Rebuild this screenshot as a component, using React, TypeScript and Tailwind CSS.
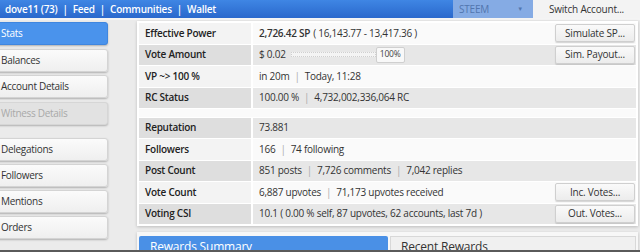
import React from "react";

const font = { fontFamily: '"Open Sans", "Liberation Sans", sans-serif' };

function SideBtn({ label, active, disabled }: { label: string; active?: boolean; disabled?: boolean }) {
  let cls =
    "h-[23px] w-[116px] -ml-[8px] pl-[8px] flex items-center rounded-[3px] text-[10px] tracking-[-0.3px] shadow-[0_1px_2px_rgba(0,0,0,0.25)] ";
  if (active) cls += "bg-[#4a93ec] text-white border border-[#3f86df]";
  else if (disabled) cls += "bg-[#e2e2e2] text-[#a9a9a9] border border-[#d6d6d6]";
  else cls += "bg-gradient-to-b from-[#fbfbfb] to-[#efefef] text-[#333] border border-[#d4d4d4]";
  return <div className={cls}>{label}</div>;
}

function Btn({ label }: { label: string }) {
  return (
    <div className="h-[18px] w-[80px] flex items-center justify-center rounded-[2px] border border-[#cfcfcf] bg-gradient-to-b from-[#fafafa] to-[#ececec] text-[10px] tracking-[-0.2px] text-[#333] shadow-[0_1px_1px_rgba(0,0,0,0.15)]">
      {label}
    </div>
  );
}

function Row({
  label,
  children,
  gray,
  btn,
}: {
  label: string;
  children: React.ReactNode;
  gray?: boolean;
  btn?: string;
}) {
  return (
    <div className="flex h-[20.5px] gap-[2px]">
      <div
        className={
          "w-[112px] shrink-0 flex items-center pl-[6px] text-[10px] tracking-[-0.25px] font-semibold text-[#222] " +
          (gray ? "bg-[#dedede]" : "bg-[#f3f3f3]")
        }
      >
        {label}
      </div>
      <div
        className={
          "flex-1 flex items-center pl-[6px] pr-[1px] text-[10px] tracking-[-0.25px] text-[#333] " +
          (gray ? "bg-[#e7e7e7]" : "bg-[#fafafa]")
        }
      >
        <div className="flex-1 flex items-center">{children}</div>
        {btn && <Btn label={btn} />}
      </div>
    </div>
  );
}

const Sep = () => <span className="text-[#aaa] mx-[5px]">|</span>;

export default function App() {
  return (
    <div className="w-[640px] h-[252px] overflow-hidden bg-[#ebebeb] flex flex-col relative" style={font}>
      {/* top bar */}
      <div className="h-[18px] shrink-0 flex items-stretch bg-gradient-to-b from-[#3f86e4] to-[#2a68cc]">
        <div className="flex-1 flex items-center pl-[5px] text-[10px] tracking-[-0.25px] font-semibold text-white">
          <span>dove11 (73)</span>
          <span className="mx-[5px]">|</span>
          <span>Feed</span>
          <span className="mx-[5px]">|</span>
          <span>Communities</span>
          <span className="mx-[5px]">|</span>
          <span>Wallet</span>
        </div>
        <div className="w-[80px] flex items-center justify-between pl-[6px] pr-[10px] bg-[#85abe4] text-[10px] tracking-[-0.2px] text-[#5276ae]">
          <span>STEEM</span>
          <span className="text-[6px]">▼</span>
        </div>
        <div className="w-[107px] flex items-center justify-center bg-[#f3f3f3] text-[10px] tracking-[-0.2px] text-[#333]">
          Switch Account...
        </div>
      </div>
      <div className="h-[2px] shrink-0 bg-[#f4f4f4]" />

      <div className="flex flex-1">
        {/* sidebar */}
        <div className="w-[137px] shrink-0 flex flex-col pt-[2px]">
          <div className="flex flex-col gap-[3.5px]">
            <SideBtn label="Stats" active />
            <SideBtn label="Balances" />
            <SideBtn label="Account Details" />
            <SideBtn label="Witness Details" disabled />
          </div>
          <div className="h-[13.5px]" />
          <div className="flex flex-col gap-[3px]">
            <SideBtn label="Delegations" />
            <SideBtn label="Followers" />
            <SideBtn label="Mentions" />
            <SideBtn label="Orders" />
          </div>
        </div>

        {/* main */}
        <div className="w-[501px] flex flex-col">
          <div className="mt-[1px] bg-white p-[2px] shadow-[0_1px_3px_rgba(0,0,0,0.2)] flex flex-col gap-[1px]">
            <Row label="Effective Power" btn="Simulate SP...">
              <span className="font-semibold">2,726.42 SP</span>
              <span className="ml-[3px]">( 16,143.77 - 13,417.36 )</span>
            </Row>
            <Row label="Vote Amount" gray btn="Sim. Payout...">
              <span>$ 0.02</span>
              <div className="ml-[5px] w-[85px] h-[5px] border border-dotted border-[#cfcfcf] bg-[#f4f4f4]" />
              <div className="h-[16px] w-[29px] flex items-center justify-center rounded-[2px] border border-[#cfcfcf] bg-[#f8f8f8] text-[8.5px] text-[#444]">
                100%
              </div>
            </Row>
            <Row label="VP ~> 100 %">
              <span>in 20m</span>
              <Sep />
              <span>Today, 11:28</span>
            </Row>
            <Row label="RC Status" gray>
              <span>100.00 %</span>
              <Sep />
              <span>4,732,002,336,064 RC</span>
            </Row>
            <div className="h-[7.5px] bg-[#fafafa]" />
            <Row label="Reputation" gray>
              <span>73.881</span>
            </Row>
            <Row label="Followers">
              <span>166</span>
              <Sep />
              <span>74 following</span>
            </Row>
            <Row label="Post Count" gray>
              <span>851 posts</span>
              <Sep />
              <span>7,726 comments</span>
              <Sep />
              <span>7,042 replies</span>
            </Row>
            <Row label="Vote Count" btn="Inc. Votes...">
              <span>6,887 upvotes</span>
              <Sep />
              <span>71,173 upvotes received</span>
            </Row>
            <Row label="Voting CSI" gray btn="Out. Votes...">
              <span>10.1 ( 0.00 % self, 87 upvotes, 62 accounts, last 7d )</span>
            </Row>
          </div>

          <div className="mt-[6px] bg-[#f7f7f7] px-[2px] pt-[4px] flex gap-[2px] shadow-[0_1px_3px_rgba(0,0,0,0.2)] h-[30px]">
            <div className="w-[249px] h-[20px] bg-[#4a90e6] text-white text-[12px] leading-[14px] tracking-[-0.2px] pl-[11px] pt-[4px] rounded-t-[2px]">
              Rewards Summary
            </div>
            <div className="flex-1 h-[20px] bg-[#f0f0f0] border border-[#d8d8d8] text-[#333] text-[12px] leading-[14px] tracking-[-0.2px] pl-[10px] pt-[3px]">
              Recent Rewards
            </div>
          </div>
        </div>
      </div>
      <div className="absolute left-0 right-0 bottom-0 h-[2px] bg-[#5a5a5a]" />
    </div>
  );
}
